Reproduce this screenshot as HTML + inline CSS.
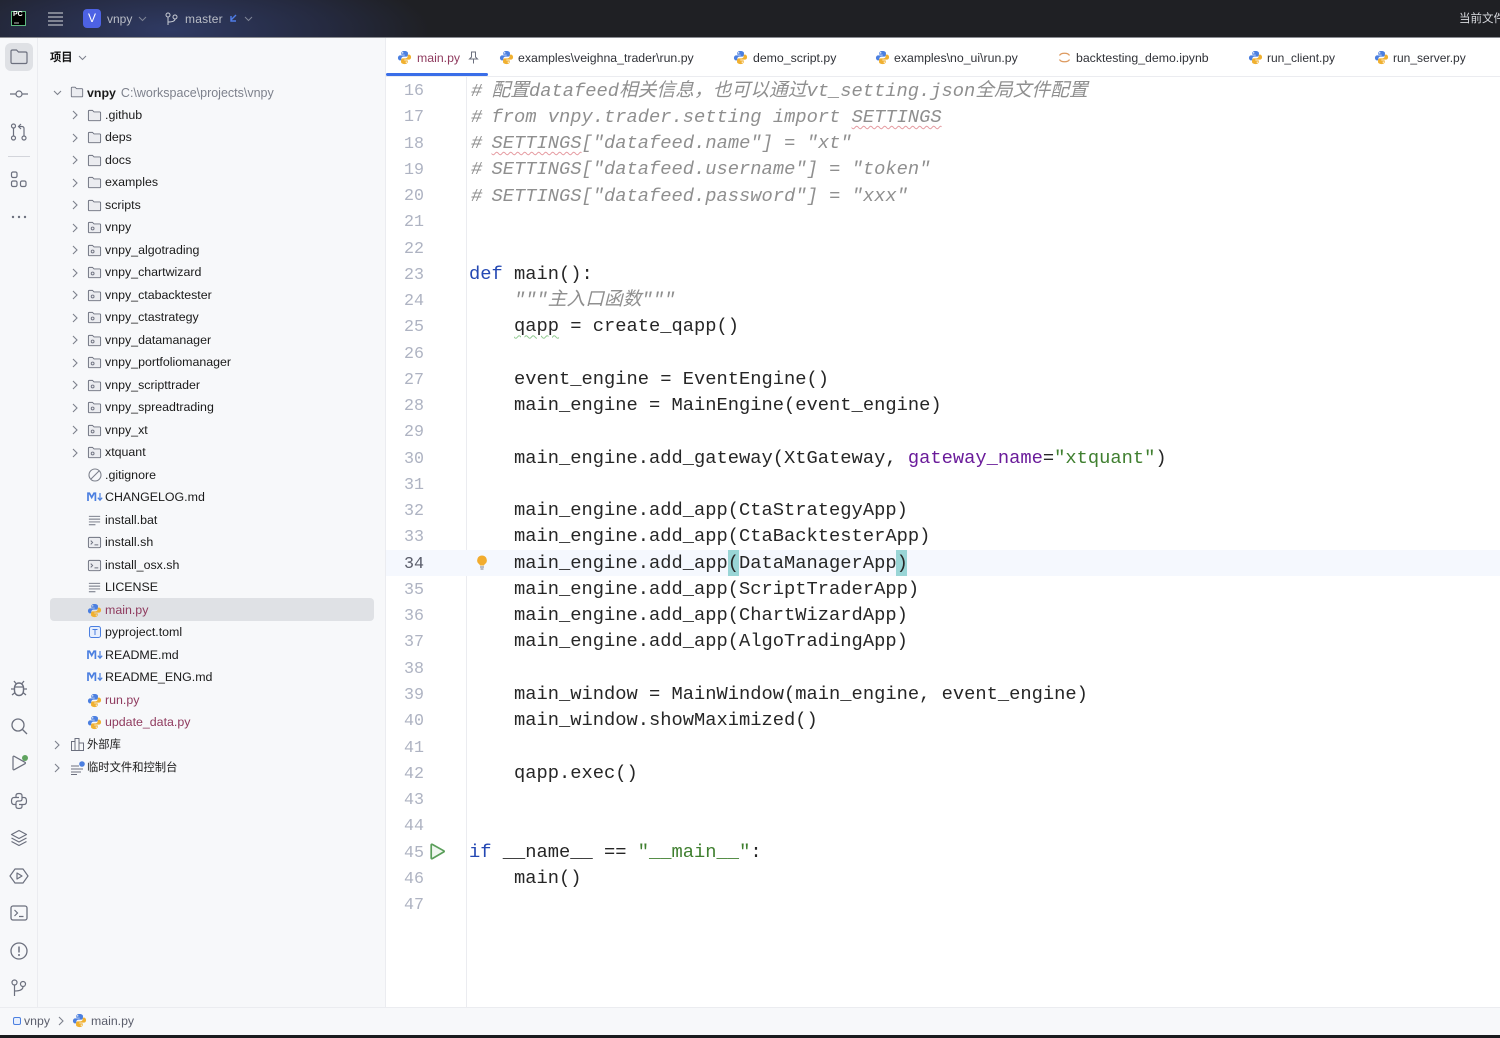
<!DOCTYPE html>
<html lang="zh"><head><meta charset="utf-8"><title>vnpy – main.py</title>
<style>
*{box-sizing:border-box}
html,body{margin:0;padding:0;width:1500px;height:1038px;overflow:hidden;background:#fff}
body{position:relative;font-family:"Liberation Sans","Noto Sans CJK SC",sans-serif;font-size:12.5px;color:#000}
.a{position:absolute}
svg{position:absolute;overflow:visible;fill:none}
#top{left:0;top:0;width:1500px;height:38px;background:radial-gradient(ellipse 260px 70px at 170px 30px,#2f3a63 0%,#252a40 60%,#1f2024 100%);border-bottom:1px solid #8a8c92}
#top span{position:absolute;color:#b9bdc6;font-size:12px;top:12px;line-height:15px}
#strip{left:0;top:38px;width:38px;height:969px;background:#f7f8fa;border-right:1px solid #ebecf0}
#side{left:38px;top:38px;width:348px;height:969px;background:#f7f8fa;border-right:1px solid #ebecf0}
#tabs{left:386px;top:38px;width:1114px;height:39px;background:#fff;border-bottom:1px solid #ebecf0}
.t{position:absolute;top:12px;line-height:16px;font-size:12.3px;color:#303238;white-space:nowrap}
.r{position:absolute;left:0;height:22.5px;line-height:22px;white-space:nowrap;font-size:12.4px;color:#1a1a1a}
.m{color:#8f3a5e}
#gut{left:466px;top:77px;width:1px;height:930px;background:#ebecf0}
.n{position:absolute;left:386px;width:38px;text-align:right;font:16.67px/26px "Liberation Mono",monospace;color:#aeb3c2;margin-top:2px}
.c{position:absolute;left:469px;font:18.75px/26px "Liberation Mono","Noto Sans CJK SC",monospace;color:#262626;white-space:pre}
.g{color:#8f8f8f;font-style:italic}
.h{position:relative;left:2px}
.k{color:#2448b3}.s{color:#3f7f2f}.p{color:#6a1b9a}
.sq{text-decoration:underline wavy;text-underline-offset:3px;text-decoration-thickness:1px}
#status{left:0;top:1007px;width:1500px;height:28px;background:#f7f8fa;border-top:1px solid #ebecf0}
#bb{left:0;top:1035px;width:1500px;height:3px;background:#1a1b1e}
</style></head><body>
<svg width="0" height="0" style="position:absolute">
<defs>
<symbol id="py" viewBox="0 0 16 16"><path fill="#4b7fe0" d="M7.9 1C5.6 1 4.6 2 4.6 3.3V5h3.6v.7H3.3C2 5.700 1 6.800 1 8.300c0 1.700 1 2.800 2.300 2.800h1.300V9.300c0-1.200 1-2.200 2.300-2.200h3c1 0 1.800-.8 1.800-1.800V3.300C11.700 2 10.400 1 7.900 1zM6.100 2.300a.7.700 0 1 1 0 1.500.7.700 0 0 1 0-1.500z"/><path fill="#f0b030" d="M8.100 15c2.300 0 3.300-1 3.300-2.300V11H7.800v-.7h4.900c1.300 0 2.300-1.100 2.300-2.600 0-1.700-1-2.800-2.300-2.800h-1.300v1.800c0 1.200-1 2.200-2.300 2.200h-3c-1 0-1.800.8-1.800 1.800v2C4.300 14 5.600 15 8.100 15zM9.900 13.700a.7.700 0 1 1 0-1.500.7.700 0 0 1 0 1.500z"/></symbol>
<symbol id="folder" viewBox="0 0 16 16"><path d="M1.500 3.500c0-.6.400-1 1-1h3.300l1.700 1.700h6c.6 0 1 .4 1 1v7.300c0 .6-.4 1-1 1h-11c-.6 0-1-.4-1-1z" fill="#ebecf0" stroke="#6c707e"/></symbol>
<symbol id="mod" viewBox="0 0 16 16"><path d="M1.500 3.500c0-.6.400-1 1-1h3.300l1.700 1.700h6c.6 0 1 .4 1 1v7.300c0 .6-.4 1-1 1h-11c-.6 0-1-.4-1-1z" fill="#ebecf0" stroke="#6c707e"/><circle cx="6" cy="9" r="1.500" fill="none" stroke="#6c707e"/></symbol>
<symbol id="ch" viewBox="0 0 8 10"><path d="M2 1l4 4-4 4" stroke="#7d818c" stroke-width="1.100" fill="none"/></symbol>
<symbol id="txt" viewBox="0 0 16 16"><path d="M2 3.500h12M2 6.500h12M2 9.500h12M2 12.500h7" stroke="#6c707e" fill="none"/></symbol>
<symbol id="sh" viewBox="0 0 16 16"><rect x="1.500" y="2.500" width="13" height="11" rx="1.500" fill="#ebecf0" stroke="#6c707e"/><path d="M4 6l2 2-2 2M8 10.500h4" stroke="#6c707e" fill="none"/></symbol>
<symbol id="md" viewBox="0 0 16 10"><path d="M1 9V1.200h1.400L4.700 5.500 7 1.200h1.400V9" fill="none" stroke="#4b7fe0" stroke-width="1.700"/><path d="M13 1v7M10.800 5.700l2.200 2.500 2.200-2.500" stroke="#4b7fe0" stroke-width="1.200" fill="none"/></symbol>
</defs></svg>

<div id="top" class="a">
<svg style="left:11px;top:11px" width="15" height="15"><rect x=".5" y=".5" width="14" height="14" fill="#000" stroke="#5cb87f"/><path d="M3 12h5" stroke="#bbb"/></svg>
<span style="left:13px;top:10px;font-size:7px;font-weight:700;color:#fff;line-height:10px">PC</span>
<svg style="left:48px;top:12px" width="15" height="14"><path d="M0 1h15M0 5h15M0 9h15M0 13h15" stroke="#b5b8c0" stroke-width="1.300"/></svg>
<div class="a" style="left:83px;top:9px;width:18px;height:19px;background:#4d62e4;border-radius:4px;color:#fff;font-size:12px;line-height:19px;text-align:center">V</div>
<span style="left:107px">vnpy</span>
<svg style="left:138px;top:16px" width="9" height="6"><path d="M1 1l3.500 3.500L8 1" stroke="#7f8596"/></svg>
<svg style="left:165px;top:12px" width="13" height="14"><circle cx="3" cy="3" r="2" stroke="#c8ccd4"/><circle cx="10" cy="5" r="2" stroke="#c8ccd4"/><path d="M3 5v8M3 10c4 0 7-1 7-3" stroke="#c8ccd4"/></svg>
<span style="left:185px;letter-spacing:.2px">master</span>
<svg style="left:229px;top:14px" width="9" height="9"><path d="M7 1L2 6M2 2v5h5" stroke="#4f7de8" stroke-width="1.400"/></svg>
<svg style="left:244px;top:16px" width="9" height="6"><path d="M1 1l3.500 3.500L8 1" stroke="#7f8596"/></svg>
<span style="left:1459px;font-size:11.500px;top:12px;white-space:nowrap;color:#d6d8dd">当前文件</span>
</div>

<div id="strip" class="a">
<div class="a" style="left:5px;top:5px;width:28px;height:28px;background:#dfe1e5;border-radius:6px"></div>
<svg style="left:10px;top:11px" width="18" height="16"><path d="M1 2.500c0-.8.500-1.500 1.500-1.500h4l2 2h7c1 0 1.500.5 1.500 1.500v8.500c0 1-.5 1.500-1.500 1.500h-13c-1 0-1.500-.5-1.500-1.500z" stroke="#6c707e" stroke-width="1.200"/></svg>
<svg style="left:9px;top:49px" width="20" height="14"><circle cx="10" cy="7" r="3" stroke="#6c707e" stroke-width="1.200"/><path d="M1 7h6M13 7h6" stroke="#6c707e" stroke-width="1.200"/></svg>
<svg style="left:10px;top:85px" width="18" height="18"><circle cx="3.500" cy="3" r="2" stroke="#6c707e" stroke-width="1.200"/><circle cx="3.500" cy="15" r="2" stroke="#6c707e" stroke-width="1.200"/><circle cx="14" cy="15" r="2" stroke="#6c707e" stroke-width="1.200"/><path d="M3.500 5v8M14 13V5.500c0-1-.5-2-2-2H9M11 1L8.500 3.500 11 6" stroke="#6c707e" stroke-width="1.200"/></svg>
<div class="a" style="left:8px;top:117.500px;width:22px;height:1px;background:#d3d5db"></div>
<svg style="left:10px;top:133px" width="18" height="18"><rect x="1.500" y="1" width="5.500" height="5.500" rx="1.500" stroke="#6c707e" stroke-width="1.200"/><rect x="1.500" y="10" width="5.500" height="5.500" rx="1.500" stroke="#6c707e" stroke-width="1.200"/><rect x="10.500" y="10" width="5.500" height="5.500" rx="1.500" stroke="#6c707e" stroke-width="1.200"/></svg>
<svg style="left:11px;top:177px" width="16" height="4"><circle cx="2" cy="2" r="1.200" fill="#6c707e"/><circle cx="8" cy="2" r="1.200" fill="#6c707e"/><circle cx="14" cy="2" r="1.200" fill="#6c707e"/></svg>
<svg style="left:10px;top:641px" width="18" height="18"><path d="M4.500 9c0-3 2-5 4.500-5s4.500 2 4.500 5v2.500c0 3-2 5-4.500 5s-4.500-2-4.500-5z" stroke="#6c707e" stroke-width="1.400"/><path d="M4.800 8h8.400M6 4.500L4 2M12 4.500L14 2M4.500 10H1M13.500 10H17M5 13.500L2 16M13 13.500L16 16" stroke="#6c707e" stroke-width="1.300"/></svg>
<svg style="left:10px;top:679px" width="18" height="18"><circle cx="8" cy="8" r="6" stroke="#6c707e" stroke-width="1.300"/><path d="M12.500 12.500L17 17" stroke="#6c707e" stroke-width="1.300"/></svg>
<svg style="left:11px;top:716px" width="18" height="18"><path d="M2 3v12c0 .8.600 1 1.200.7L14 9.700c.6-.4.600-1 0-1.400L3.200 2.300C2.600 2 2 2.200 2 3z" stroke="#6c707e" stroke-width="1.200"/><circle cx="14" cy="4" r="3" fill="#5fa35f"/></svg>
<svg style="left:10px;top:754px" width="18" height="18"><path d="M6 5.500V3.500C6 2 7 1.500 9 1.500s3 .5 3 2V7c0 1.200-.8 2-2 2H8C6.800 9 6 9.800 6 11v3.500c0 1.500 1 2 3 2s3-.5 3-2v-2M6 5.500H4C2 5.500 1.500 7 1.500 9S2 12.500 4 12.500h2M12 5.500h2c2 0 2.500 1.500 2.500 3.500s-.5 3.500-2.500 3.500H9M6 5.500h3" stroke="#6c707e" stroke-width="1.200"/></svg>
<svg style="left:10px;top:791px" width="18" height="18"><path d="M9 1.500L16.500 5.500 9 9.500 1.500 5.500zM1.500 9L9 13l7.500-4M1.500 12.500L9 16.500l7.500-4" stroke="#6c707e" stroke-width="1.200" stroke-linejoin="round"/></svg>
<svg style="left:9px;top:829px" width="20" height="18"><path d="M6 2h8l5 7-5 7H6L1 9z" stroke="#6c707e" stroke-width="1.200" stroke-linejoin="round"/><path d="M8 6v6l5-3z" stroke="#6c707e" stroke-width="1.200" stroke-linejoin="round"/></svg>
<svg style="left:10px;top:866px" width="18" height="18"><rect x="1" y="2" width="16" height="14" rx="2" stroke="#6c707e" stroke-width="1.300"/><path d="M4.500 6l3 3-3 3M9 12.500h4.500" stroke="#6c707e" stroke-width="1.200"/></svg>
<svg style="left:10px;top:904px" width="18" height="18"><circle cx="9" cy="9" r="8" stroke="#6c707e" stroke-width="1.300"/><path d="M9 4.500v6" stroke="#6c707e" stroke-width="1.500"/><circle cx="9" cy="13" r="1" fill="#6c707e"/></svg>
<svg style="left:11px;top:941px" width="16" height="18"><circle cx="3.500" cy="3.500" r="2.500" stroke="#6c707e" stroke-width="1.200"/><circle cx="12" cy="5" r="2.500" stroke="#6c707e" stroke-width="1.200"/><path d="M3.500 6v11M3.500 12c5 0 8.500-1 8.500-4.500" stroke="#6c707e" stroke-width="1.200"/></svg>
</div>

<div id="side" class="a"></div>
<div class="a" style="left:50px;top:50px;font-size:11.300px;font-weight:700;color:#111;line-height:16px">项目</div>
<svg style="left:78px;top:55px" width="9" height="6"><path d="M1 1l3.500 3.500L8 1" stroke="#7d818c"/></svg>
<div class="a" style="left:50px;top:598px;width:324px;height:23px;background:#dfe1e5;border-radius:4px"></div>

<!-- tree -->
<div class="a" style="left:0;top:81px;width:386px;height:720px">
<svg style="left:53px;top:9px" width="9" height="6"><path d="M1 1l3.500 3.500L8 1" stroke="#7d818c" stroke-width="1.100"/></svg>
<svg style="left:70px;top:4px" width="14" height="14"><use href="#folder"/></svg>
<div class="r" style="top:1px;left:87px"><b>vnpy</b><span style="color:#7d818c;margin-left:5px;font-size:12.500px">C:\workspace\projects\vnpy</span></div>
<div class="r" style="top:22.500px;left:105px">.github</div>
<div class="r" style="top:45px;left:105px">deps</div>
<div class="r" style="top:67.500px;left:105px">docs</div>
<div class="r" style="top:90px;left:105px">examples</div>
<div class="r" style="top:112.500px;left:105px">scripts</div>
<div class="r" style="top:135px;left:105px">vnpy</div>
<div class="r" style="top:157.500px;left:105px">vnpy_algotrading</div>
<div class="r" style="top:180px;left:105px">vnpy_chartwizard</div>
<div class="r" style="top:202.500px;left:105px">vnpy_ctabacktester</div>
<div class="r" style="top:225px;left:105px">vnpy_ctastrategy</div>
<div class="r" style="top:247.500px;left:105px">vnpy_datamanager</div>
<div class="r" style="top:270px;left:105px">vnpy_portfoliomanager</div>
<div class="r" style="top:292.500px;left:105px">vnpy_scripttrader</div>
<div class="r" style="top:315px;left:105px">vnpy_spreadtrading</div>
<div class="r" style="top:337.500px;left:105px">vnpy_xt</div>
<div class="r" style="top:360px;left:105px">xtquant</div>
<div class="r" style="top:382.500px;left:105px">.gitignore</div>
<div class="r" style="top:405px;left:105px">CHANGELOG.md</div>
<div class="r" style="top:427.500px;left:105px">install.bat</div>
<div class="r" style="top:450px;left:105px">install.sh</div>
<div class="r" style="top:472.500px;left:105px">install_osx.sh</div>
<div class="r" style="top:495px;left:105px">LICENSE</div>
<div class="r m" style="top:517.500px;left:105px">main.py</div>
<div class="r" style="top:540px;left:105px">pyproject.toml</div>
<div class="r" style="top:562.500px;left:105px">README.md</div>
<div class="r" style="top:585px;left:105px">README_ENG.md</div>
<div class="r m" style="top:607.500px;left:105px">run.py</div>
<div class="r m" style="top:630px;left:105px">update_data.py</div>
<div class="r" style="top:653px;left:87px;font-size:11.300px">外部库</div>
<div class="r" style="top:676px;left:87px;font-size:11.300px">临时文件和控制台</div>

<svg style="left:71px;top:29px" width="8" height="10"><use href="#ch"/></svg>
<svg style="left:71px;top:52px" width="8" height="10"><use href="#ch"/></svg>
<svg style="left:71px;top:74px" width="8" height="10"><use href="#ch"/></svg>
<svg style="left:71px;top:97px" width="8" height="10"><use href="#ch"/></svg>
<svg style="left:71px;top:119px" width="8" height="10"><use href="#ch"/></svg>
<svg style="left:71px;top:142px" width="8" height="10"><use href="#ch"/></svg>
<svg style="left:71px;top:164px" width="8" height="10"><use href="#ch"/></svg>
<svg style="left:71px;top:187px" width="8" height="10"><use href="#ch"/></svg>
<svg style="left:71px;top:209px" width="8" height="10"><use href="#ch"/></svg>
<svg style="left:71px;top:232px" width="8" height="10"><use href="#ch"/></svg>
<svg style="left:71px;top:254px" width="8" height="10"><use href="#ch"/></svg>
<svg style="left:71px;top:277px" width="8" height="10"><use href="#ch"/></svg>
<svg style="left:71px;top:299px" width="8" height="10"><use href="#ch"/></svg>
<svg style="left:71px;top:322px" width="8" height="10"><use href="#ch"/></svg>
<svg style="left:71px;top:344px" width="8" height="10"><use href="#ch"/></svg>
<svg style="left:71px;top:367px" width="8" height="10"><use href="#ch"/></svg>
<svg style="left:53px;top:659px" width="8" height="10"><use href="#ch"/></svg>
<svg style="left:53px;top:682px" width="8" height="10"><use href="#ch"/></svg>

<svg style="left:87px;top:27px" width="15" height="15"><use href="#folder"/></svg>
<svg style="left:87px;top:49px" width="15" height="15"><use href="#folder"/></svg>
<svg style="left:87px;top:72px" width="15" height="15"><use href="#folder"/></svg>
<svg style="left:87px;top:94px" width="15" height="15"><use href="#folder"/></svg>
<svg style="left:87px;top:117px" width="15" height="15"><use href="#folder"/></svg>
<svg style="left:87px;top:139px" width="15" height="15"><use href="#mod"/></svg>
<svg style="left:87px;top:162px" width="15" height="15"><use href="#mod"/></svg>
<svg style="left:87px;top:184px" width="15" height="15"><use href="#mod"/></svg>
<svg style="left:87px;top:207px" width="15" height="15"><use href="#mod"/></svg>
<svg style="left:87px;top:229px" width="15" height="15"><use href="#mod"/></svg>
<svg style="left:87px;top:252px" width="15" height="15"><use href="#mod"/></svg>
<svg style="left:87px;top:274px" width="15" height="15"><use href="#mod"/></svg>
<svg style="left:87px;top:297px" width="15" height="15"><use href="#mod"/></svg>
<svg style="left:87px;top:319px" width="15" height="15"><use href="#mod"/></svg>
<svg style="left:87px;top:342px" width="15" height="15"><use href="#mod"/></svg>
<svg style="left:87px;top:364px" width="15" height="15"><use href="#mod"/></svg>
<svg style="left:88px;top:387px" width="14" height="14"><circle cx="7" cy="7" r="6" stroke="#7d818c" stroke-width="1.100"/><path d="M3 11l8-8" stroke="#7d818c" stroke-width="1.100"/></svg>
<svg style="left:87px;top:411px" width="16" height="10"><use href="#md"/></svg>
<svg style="left:87px;top:432px" width="15" height="15"><use href="#txt"/></svg>
<svg style="left:87px;top:454px" width="15" height="15"><use href="#sh"/></svg>
<svg style="left:87px;top:477px" width="15" height="15"><use href="#sh"/></svg>
<svg style="left:87px;top:499px" width="15" height="15"><use href="#txt"/></svg>
<svg style="left:87px;top:522px" width="15" height="15"><use href="#py"/></svg>
<svg style="left:88px;top:544px" width="14" height="14"><rect x="1.500" y="1.500" width="11" height="11" rx="2" fill="#e7effd" stroke="#4b7fe0"/><path d="M4.500 4.500h5M7 4.500v5.500" stroke="#4b7fe0"/></svg>
<svg style="left:87px;top:569px" width="16" height="10"><use href="#md"/></svg>
<svg style="left:87px;top:591px" width="16" height="10"><use href="#md"/></svg>
<svg style="left:87px;top:612px" width="15" height="15"><use href="#py"/></svg>
<svg style="left:87px;top:634px" width="15" height="15"><use href="#py"/></svg>
<svg style="left:71px;top:657px" width="13" height="13"><path d="M.5 3.500h3.500v9H.5zM4 .5h4v12H4zM8 5h4.500v7.500H8z" stroke="#6c707e" fill="none"/></svg>
<svg style="left:71px;top:680px" width="14" height="14"><path d="M0 5h8M0 8h12M0 11h10M0 13.500h6" stroke="#6c707e" fill="none"/><circle cx="11" cy="3" r="2.800" fill="#4b7fe0"/></svg>
</div>

<!-- tabs -->
<div id="tabs" class="a">
<div class="a" style="left:0;top:35px;width:102px;height:3px;background:#3a6ee8;border-radius:2px"></div>
<svg style="left:11px;top:12px" width="15" height="15"><use href="#py"/></svg>
<div class="t" style="left:31px;color:#8f3a5e">main.py</div>
<svg style="left:82px;top:13px" width="11" height="13"><path d="M3 1h5M3.500 1v5L1.500 8h8l-2-2V1M5.500 8v4.500" stroke="#6c707e" fill="none"/></svg>
<svg style="left:113px;top:12px" width="15" height="15"><use href="#py"/></svg>
<div class="t" style="left:132px">examples\veighna_trader\run.py</div>
<svg style="left:347px;top:12px" width="15" height="15"><use href="#py"/></svg>
<div class="t" style="left:367px">demo_script.py</div>
<svg style="left:489px;top:12px" width="15" height="15"><use href="#py"/></svg>
<div class="t" style="left:508px">examples\no_ui\run.py</div>
<svg style="left:672px;top:13px" width="13" height="13"><path d="M1.500 4.500C3 1.500 10 1.500 11.500 4.500M1.500 8.500C3 11.500 10 11.500 11.500 8.500" stroke="#dd9a5f" stroke-width="1.300" fill="none"/></svg>
<div class="t" style="left:690px">backtesting_demo.ipynb</div>
<svg style="left:862px;top:12px" width="15" height="15"><use href="#py"/></svg>
<div class="t" style="left:881px;font-size:12px">run_client.py</div>
<svg style="left:988px;top:12px" width="15" height="15"><use href="#py"/></svg>
<div class="t" style="left:1007px;font-size:12px">run_server.py</div>
</div>

<!-- editor -->
<div id="gut" class="a"></div>
<div class="a" style="left:386px;top:550px;width:1114px;height:26px;background:#f5f8fe"></div>
<div class="a" style="left:728px;top:550px;width:11px;height:26px;background:#99d5d6"></div>
<div class="a" style="left:896px;top:550px;width:11px;height:26px;background:#99d5d6"></div>

<div class="n" style="top:77px">16</div>
<div class="n" style="top:103.260px">17</div>
<div class="n" style="top:129.520px">18</div>
<div class="n" style="top:155.780px">19</div>
<div class="n" style="top:182.040px">20</div>
<div class="n" style="top:208.300px">21</div>
<div class="n" style="top:234.560px">22</div>
<div class="n" style="top:260.820px">23</div>
<div class="n" style="top:287.080px">24</div>
<div class="n" style="top:313.340px">25</div>
<div class="n" style="top:339.600px">26</div>
<div class="n" style="top:365.860px">27</div>
<div class="n" style="top:392.120px">28</div>
<div class="n" style="top:418.380px">29</div>
<div class="n" style="top:444.640px">30</div>
<div class="n" style="top:470.900px">31</div>
<div class="n" style="top:497.160px">32</div>
<div class="n" style="top:523.420px">33</div>
<div class="n" style="top:549.680px;color:#5a5d6b">34</div>
<div class="n" style="top:575.940px">35</div>
<div class="n" style="top:602.200px">36</div>
<div class="n" style="top:628.460px">37</div>
<div class="n" style="top:654.720px">38</div>
<div class="n" style="top:680.980px">39</div>
<div class="n" style="top:707.240px">40</div>
<div class="n" style="top:733.500px">41</div>
<div class="n" style="top:759.760px">42</div>
<div class="n" style="top:786.020px">43</div>
<div class="n" style="top:812.280px">44</div>
<div class="n" style="top:838.540px">45</div>
<div class="n" style="top:864.800px">46</div>
<div class="n" style="top:891.060px">47</div>

<div class="c g" style="top:77.500px"><span class="h">#</span> 配置datafeed相关信息，也可以通过vt_setting.json全局文件配置</div>
<div class="c g" style="top:103.760px"><span class="h">#</span> from vnpy.trader.setting import <span class="sq" style="text-decoration-color:#e59aa0">SETTINGS</span></div>
<div class="c g" style="top:130px"><span class="h">#</span> <span class="sq" style="text-decoration-color:#e59aa0">SETTINGS</span>["datafeed.name"] = "xt"</div>
<div class="c g" style="top:156.280px"><span class="h">#</span> SETTINGS["datafeed.username"] = "token"</div>
<div class="c g" style="top:182.540px"><span class="h">#</span> SETTINGS["datafeed.password"] = "xxx"</div>
<div class="c" style="top:260.820px"><span class="k">def</span> main():</div>
<div class="c g" style="top:287.080px">    """主入口函数"""</div>
<div class="c" style="top:313.340px">    <span class="sq" style="text-decoration-color:#8fc98f">qapp</span> = create_qapp()</div>
<div class="c" style="top:365.860px">    event_engine = EventEngine()</div>
<div class="c" style="top:392.120px">    main_engine = MainEngine(event_engine)</div>
<div class="c" style="top:444.640px">    main_engine.add_gateway(XtGateway, <span class="p">gateway_name</span>=<span class="s">"xtquant"</span>)</div>
<div class="c" style="top:497.160px">    main_engine.add_app(CtaStrategyApp)</div>
<div class="c" style="top:523.420px">    main_engine.add_app(CtaBacktesterApp)</div>
<div class="c" style="top:549.680px">    main_engine.add_app(DataManagerApp)</div>
<div class="c" style="top:575.940px">    main_engine.add_app(ScriptTraderApp)</div>
<div class="c" style="top:602.200px">    main_engine.add_app(ChartWizardApp)</div>
<div class="c" style="top:628.460px">    main_engine.add_app(AlgoTradingApp)</div>
<div class="c" style="top:680.980px">    main_window = MainWindow(main_engine, event_engine)</div>
<div class="c" style="top:707.240px">    main_window.showMaximized()</div>
<div class="c" style="top:759.760px">    qapp.exec()</div>
<div class="c" style="top:838.540px"><span class="k">if</span> __name__ == <span class="s">"__main__"</span>:</div>
<div class="c" style="top:864.800px">    main()</div>

<svg style="left:476px;top:555px" width="12" height="15"><path d="M6 .5a4.800 4.800 0 0 0-2.800 8.700c.5.400.7.900.8 1.300h4c.1-.4.300-.9.800-1.300A4.800 4.800 0 0 0 6 .500z" fill="#f2ac2e"/><path d="M4 12h4M4.500 14h3" stroke="#7d818c"/></svg>
<svg style="left:430px;top:843px" width="16" height="17"><path d="M1.200 2v13c0 .7.500.9 1.100.6l11.500-6.700c.5-.3.500-.8 0-1.100L2.300 1.400c-.6-.3-1.100-.1-1.100.6z" stroke="#5a9e5a" stroke-width="1.700" fill="#f0f7f0"/></svg>

<!-- status -->
<div id="status" class="a"></div>
<svg style="left:13px;top:1017px" width="8" height="8"><rect x=".5" y=".5" width="7" height="7" rx="1.500" fill="#e7effd" stroke="#4b7fe0"/></svg>
<div class="a" style="left:24px;top:1013px;font-size:12.300px;line-height:16px;color:#5a5d6b">vnpy</div>
<svg style="left:58px;top:1016px" width="6" height="10"><path d="M1 1l4 4-4 4" stroke="#7d818c" stroke-width="1.100"/></svg>
<svg style="left:72px;top:1013px" width="15" height="15"><use href="#py"/></svg>
<div class="a" style="left:91px;top:1013px;font-size:12.300px;line-height:16px;color:#5a5d6b">main.py</div>
<div id="bb" class="a"></div>
</body></html>
